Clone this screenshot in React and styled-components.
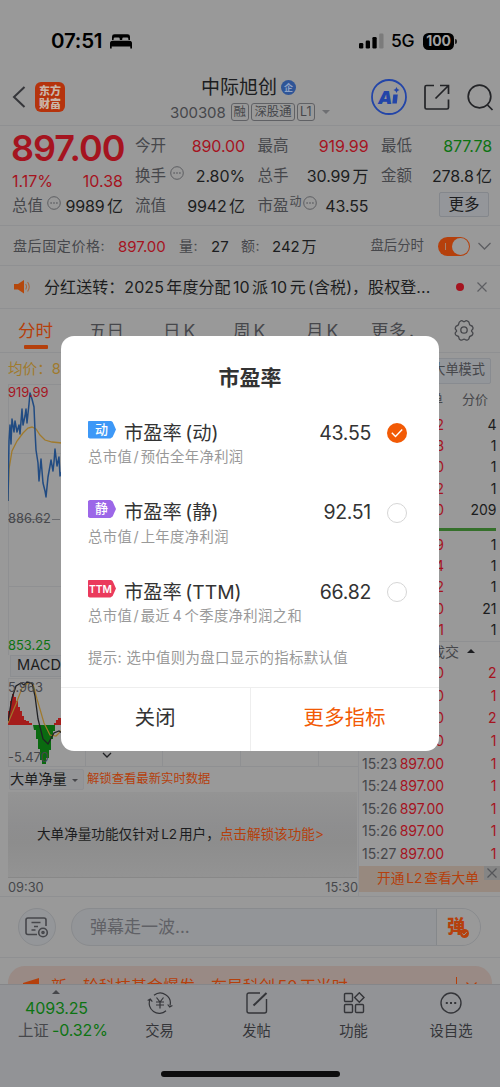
import React from "react";
import styled, { createGlobalStyle } from "styled-components";

const c = {
  page: "#999999",
  ink: "#1c1d20",
  sub: "#46474b",
  mute: "#5d5e62",
  line: "#8f9092",
  red: "#a5141f",
  green: "#0d7312",
  orange: "#b5400c",
  yellow: "#a07a2c",
  bar: "#929396",
};

const Global = createGlobalStyle`
  * { box-sizing: border-box; }
  body { margin: 0; background: ${c.page}; }
`;

const Screen = styled.div`
  position: relative;
  width: 500px;
  height: 1087px;
  overflow: hidden;
  background: ${c.page};
  color: ${c.ink};
  font-family: Inter, "Noto Sans CJK SC", sans-serif;
  font-size: 16px;
  line-height: 1;
  white-space: nowrap;
  svg { display: block; flex: none; }
`;

/* Status bar */
const StatusBar = styled.div`
  height: 66px;
  padding: 16px 43px 0 51px;
  display: flex;
  align-items: center;
  color: #000;
`;
const Clock = styled.span`
  font-size: 20.5px;
  font-weight: 600;
  letter-spacing: -0.2px;
  width: 59px;
`;
const Network = styled.span`
  font-size: 17.5px;
  font-weight: 500;
  margin: 0 9px 0 7px;
  width: 23px;
  letter-spacing: -0.3px;
`;
const Push = styled.span`
  flex: 1;
`;
const Battery = styled.span`
  width: 31px;
  height: 17px;
  border-radius: 5.5px;
  background: #000;
  color: #a3a3a3;
  font-size: 14px;
  font-weight: 700;
  letter-spacing: -0.2px;
  display: flex;
  align-items: center;
  justify-content: center;
`;
const BatteryCap = styled.span`
  width: 2px;
  height: 5px;
  margin-left: 1px;
  border-radius: 0 2px 2px 0;
  background: #222;
`;

/* Title bar */
const Header = styled.header`
  height: 60px;
  border-bottom: 1px solid ${c.line};
  padding: 3px 6px 0 12px;
  display: flex;
  align-items: center;
`;
const Logo = styled.div`
  width: 30px;
  height: 30px;
  margin: 0 0 0 9px;
  border-radius: 6px;
  background: #b5330c;
  color: #c9b5a8;
  font: 900 11px/12.5px "Noto Sans CJK SC", sans-serif;
  text-align: center;
  padding-top: 2px;
  white-space: normal;
`;
const TitleBlock = styled.div`
  width: 168px;
  margin: 7px 0 0 105px;
  height: 50px;
  display: flex;
  flex-direction: column;
`;
const StockName = styled.div`
  display: flex;
  align-items: center;
  font-size: 19px;
  height: 24px;
  padding-left: 31px;
`;
const Verified = styled.span`
  width: 15px;
  height: 15px;
  border-radius: 50%;
  margin-left: 4px;
  background: #2f5597;
  color: #8fa3c4;
  font-size: 9px;
  font-weight: 700;
  display: flex;
  align-items: center;
  justify-content: center;
`;
const CodeLine = styled.div`
  display: flex;
  align-items: center;
  height: 28px;
  color: ${c.sub};
  font-size: 15px;
  gap: 2.5px;
`;
const Code = styled.span`
  width: 58px;
  letter-spacing: -0.1px;
`;
const Tag = styled.span`
  height: 18px;
  padding: 0 2px;
  border: 1px solid #606165;
  border-radius: 3px;
  font-size: 12.4px;
  line-height: 16px;
`;
const Caret = styled.span`
  width: 0;
  height: 0;
  border: ${(p) => p.$size || 4}px solid transparent;
  border-top-color: ${(p) => (p.$up ? "transparent" : p.$color || "#6e6f72")};
  border-bottom-color: ${(p) => (p.$up ? p.$color || c.ink : "transparent")};
  margin: ${(p) => p.$m || "0"};
`;
const HeaderTools = styled.div`
  display: flex;
  align-items: center;
  margin-left: auto;
  gap: 17px;
`;

/* Quote */
const Quote = styled.section`
  height: 100px;
  padding: 4px 8px 0 12px;
  border-bottom: 1px solid ${c.line};
  display: flex;
`;
const PriceColumn = styled.div`
  width: 111px;
  margin-right: 12px;
`;
const LastPrice = styled.div`
  height: 36px;
  line-height: 36px;
  font-size: 36px;
  font-weight: 600;
  letter-spacing: -1px;
  margin-left: -1px;
  color: ${c.red};
`;
const Change = styled.div`
  height: 29px;
  display: flex;
  align-items: center;
  justify-content: space-between;
  color: ${c.red};
`;
const Stats = styled.div`
  margin-top: 1px;
  display: grid;
  grid-template-columns: 110px 111px 111px;
  grid-auto-rows: 30px;
  column-gap: 12.5px;
`;
const Stat = styled.div`
  display: flex;
  align-items: center;
  justify-content: space-between;
  height: ${(p) => p.$h || 30}px;
`;
const Label = styled.span`
  display: flex;
  align-items: center;
  gap: 4px;
  color: ${c.sub};
  font-size: 15.5px;
`;
const Sup = styled.span`
  font-size: 12px;
  margin: -9px -3px 0 -3px;
`;
const Value = styled.span`
  color: ${(p) => p.$color || c.ink};
  letter-spacing: -0.1px;
  word-spacing: -2px;
`;
const MoreButton = styled.span`
  width: 50px;
  height: 25px;
  margin: -3px 3px 0 auto;
  border: 1px solid #84878c;
  background: #94969a;
  border-radius: 2px;
  font-size: 15.5px;
  line-height: 23px;
  text-align: center;
`;

/* After-hours and notice rows */
const AfterHours = styled.section`
  height: 40px;
  padding: 1px 9px 0 13px;
  border-bottom: 1px solid ${c.line};
  display: flex;
  align-items: center;
  color: ${c.sub};
  font-size: 13.4px;
`;
const Figure = styled.span`
  width: ${(p) => p.$w}px;
  color: ${(p) => p.$color || c.ink};
  font-size: 15px;
  word-spacing: -2.5px;
`;
const Key = styled.span`
  width: ${(p) => p.$w}px;
  font-size: 14px;
  letter-spacing: 0.6px;
`;
const Toggle = styled.span`
  width: 32px;
  height: 19px;
  border-radius: 10px;
  background: ${c.orange};
  padding: 1px;
  margin: 0 8px 0 14px;
  display: flex;
  justify-content: flex-end;
  align-items: center;
`;
const ToggleMark = styled.span`
  width: 1px;
  height: 7px;
  margin-right: 6px;
  background: #a48470;
`;
const Knob = styled.span`
  width: 17px;
  height: 17px;
  border-radius: 50%;
  background: ${c.page};
`;
const Notice = styled.section`
  height: 43px;
  padding: 0 12px 0 14px;
  border-bottom: 1px solid ${c.line};
  display: flex;
  align-items: center;
`;
const NoticeText = styled.span`
  width: 412px;
  margin-left: 14px;
  font-size: 16px;
  letter-spacing: 0.07px;
  word-spacing: -2.2px;
`;
const Dot = styled.span`
  width: 8px;
  height: 8px;
  border-radius: 50%;
  background: ${c.red};
  margin-right: 13px;
`;

/* Tabs */
const Tabs = styled.nav`
  height: 44px;
  border-bottom: 1px solid ${c.line};
  display: flex;
  padding-left: 18px;
  font-size: 17.5px;
  color: ${c.sub};
`;
const Tab = styled.span`
  width: ${(p) => p.$w}px;
  padding-top: 13px;
  color: ${(p) => (p.$active ? c.orange : "inherit")};
  word-spacing: -2px;
`;
const Underline = styled.span`
  display: block;
  width: 24px;
  height: 4px;
  margin: 5px 0 0 6px;
  border-radius: 1px;
  background: ${c.orange};
`;
const Gear = styled.span`
  padding-top: 10px;
`;

/* Chart area */
const Market = styled.main`
  height: 544px;
  display: flex;
  border-bottom: 1px solid ${c.line};
`;
const Charts = styled.div`
  width: 358px;
  padding-left: 8px;
`;
const Average = styled.div`
  height: 31px;
  line-height: 32px;
  font-size: 14.6px;
  color: ${c.yellow};
`;
const Plot = styled.div`
  position: relative;
  height: ${(p) => p.$h}px;
  font-size: 12.9px;
`;
const AxisLabel = styled.span`
  position: absolute;
  left: 0;
  ${(p) => (p.$bottom !== undefined ? `bottom: ${p.$bottom}px` : `top: ${p.$top}px`)};
  color: ${(p) => p.$color || c.sub};
`;
const Indicator = styled.div`
  height: 22px;
  margin: 0 0 1px 2px;
  padding-left: 6px;
  width: 76px;
  background: #949597;
  border: 1px solid #8c8e91;
  line-height: 19px;
  font-size: 14.6px;
`;
const UnlockRow = styled.div`
  height: 25px;
  display: flex;
  align-items: center;
`;
const FlowPicker = styled.span`
  width: 75px;
  height: 21px;
  margin-left: 1px;
  display: flex;
  align-items: center;
  background: #949597;
  border: 1px solid #8f9093;
  border-radius: 2px;
  font-size: 14.2px;
`;
const UnlockHint = styled.span`
  color: ${c.orange};
  font-size: 12.35px;
  margin-left: 3px;
`;
const Locked = styled.div`
  height: 86px;
  width: 349px;
  background: linear-gradient(#949494, #8e8e8f 40%, #8d8d8d 60%, #939393);
  border-bottom: 1px solid #888;
  display: flex;
  align-items: center;
  padding-left: 29px;
  font-size: 13.6px;
  word-spacing: -2px;
`;
const Accent = styled.span`
  color: ${c.orange};
`;
const Times = styled.div`
  height: 20px;
  display: flex;
  align-items: center;
  justify-content: space-between;
  color: ${c.sub};
  font-size: 12.8px;
`;

/* Order book */
const Book = styled.aside`
  width: 142px;
  border-left: 1px solid #909194;
  font-size: 14px;
`;
const ModeButton = styled.div`
  height: 26px;
  width: 76px;
  margin: 5px 9px 0 auto;
  background: #93969a;
  border: 1px solid #888b90;
  border-radius: 2px;
  color: ${c.sub};
  font-size: 13.2px;
  line-height: 21px;
  text-align: right;
  padding-right: 5px;
`;
const BookHead = styled.div`
  height: 30px;
  padding-right: 12px;
  display: flex;
  align-items: center;
  justify-content: flex-end;
  gap: 19px;
  color: ${c.sub};
  font-size: 13px;
`;
const BookRow = styled.div`
  height: ${(p) => p.$h || 21.4}px;
  display: grid;
  grid-template-columns: 37px 45px 1fr;
  align-items: center;
  padding: 0 3.5px 0 3px;
  letter-spacing: -0.05px;
`;
const Time = styled.span`
  color: ${c.sub};
`;
const Price = styled.span`
  color: ${c.red};
  text-align: right;
  justify-self: end;
`;
const Qty = styled.span`
  color: ${(p) => (p.$red ? c.red : c.ink)};
  text-align: right;
`;
const Balance = styled.div`
  height: 3px;
  margin: 7px 4px 3px 0;
  background: #35702b;
`;
const DealHead = styled.div`
  height: 21px;
  border-top: 1px solid ${c.line};
  padding: 0 25px 0 0;
  display: flex;
  align-items: center;
  justify-content: flex-end;
  color: ${c.sub};
  font-size: 14px;
`;
const L2Banner = styled.div`
  height: 26px;
  margin-top: 1px;
  display: flex;
  justify-content: flex-end;
  background: #97897f;
  color: ${c.orange};
  font-size: 13.7px;
  line-height: 24px;
  word-spacing: -2px;
`;
const BannerClose = styled.span`
  width: 16px;
  height: 14px;
  margin-left: 5px;
  padding: 2px 0 0 3px;
  background: #858585;
`;

/* Comment row and promo */
const Comment = styled.section`
  height: 61px;
  padding: 0 19px 0 18px;
  border-bottom: 1px solid ${c.line};
  display: flex;
  align-items: center;
  justify-content: space-between;
`;
const RoundButton = styled.span`
  width: 38px;
  height: 38px;
  border-radius: 50%;
  border: 1px solid #898b8e;
  background: #949699;
  display: flex;
  align-items: center;
  justify-content: center;
`;
const Field = styled.div`
  width: 410px;
  height: 38px;
  border: 1px solid #898b8e;
  border-radius: 19px;
  background: #939598;
  display: flex;
  align-items: center;
  padding-left: 18px;
  color: #606166;
  font-size: 17px;
`;
const DanmuButton = styled.span`
  width: 44px;
  height: 36px;
  margin-left: auto;
  border-left: 1px solid #85888b;
  border-radius: 0 18px 18px 0;
  background: #999;
  display: flex;
  align-items: center;
  padding-left: 10px;
  font-size: 18px;
  font-weight: 900;
  color: ${c.orange};
`;
const DanmuCheck = styled.span`
  margin: 13px 0 0 -5px;
`;
const PromoWrap = styled.div`
  height: 26px;
  padding: 8px 8px 0;
  overflow: hidden;
`;
const Promo = styled.div`
  height: 40px;
  border-radius: 17px 17px 0 0;
  background: #998a85;
  color: ${c.orange};
  display: flex;
  padding: 12px 12px 0 15px;
  font-size: 16px;
  word-spacing: -2px;
`;
const PromoText = styled.span`
  width: 417px;
  padding-left: 12px;
`;
const PromoBar = styled.span`
  width: 1px;
  height: 16px;
  margin: -1px 9px 0 0;
  background: ${c.orange};
`;
const PromoArrow = styled.span`
  padding-top: 4px;
`;

/* Bottom navigation */
const BottomNav = styled.nav`
  height: 103px;
  border-top: 1px solid #858689;
  background: ${c.bar};
  display: flex;
  flex-direction: column;
  align-items: center;
`;
const NavItems = styled.div`
  width: 500px;
  height: 86px;
  display: grid;
  grid-template-columns: 111px 97px 97px 97px 98px;
`;
const NavItem = styled.div`
  display: flex;
  flex-direction: column;
  align-items: center;
  padding-top: 7px;
  gap: 9.500px;
  font-size: 14.3px;
  color: #343539;
`;
const IndexItem = styled.div`
  padding: 1px 0 0 18px;
  color: ${c.green};
  letter-spacing: -0.15px;
`;
const IndexValue = styled.div`
  padding: 6px 0 0 7px;
`;
const IndexChange = styled.div`
  padding-top: 6px;
  word-spacing: -1px;
`;
const Dark = styled.span`
  color: ${c.sub};
  font-size: 15.5px;
`;
const HomeBar = styled.div`
  width: 179px;
  height: 6px;
  border-radius: 3px;
  background: #0c0c0d;
`;

/* Dialog */
const Dialog = styled.div`
  position: absolute;
  left: 61px;
  top: 336px;
  width: 378px;
  height: 415px;
  border-radius: 13px;
  background: #fff;
  color: #333;
  display: flex;
  flex-direction: column;
`;
const DialogTitle = styled.h2`
  margin: 0;
  height: 80px;
  padding-top: 31px;
  font-size: 21px;
  line-height: 21px;
  font-weight: 600;
  text-align: center;
`;
const Option = styled.div`
  height: 79.5px;
  padding: 0 32px 0 27px;
`;
const OptionTop = styled.div`
  height: 34px;
  display: flex;
  align-items: center;
`;
const Kind = styled.span`
  width: 28px;
  height: 18px;
  margin-top: -7px;
  background: ${(p) => p.$color};
  color: #fff;
  clip-path: polygon(6% 0, 80% 0, 88% 8%, 100% 50%, 88% 92%, 80% 100%, 6% 100%, 0 94%, 0 6%);
  font-size: ${(p) => (p.$small ? 10.2 : 13)}px;
  font-weight: ${(p) => (p.$small ? 600 : 500)};
  line-height: ${(p) => (p.$small ? 18 : 17)}px;
  padding-right: ${(p) => (p.$small ? 3 : 1)}px;
  text-align: center;
`;
const OptionName = styled.span`
  margin: 1px 0 0 8px;
  font-size: 19.3px;
  word-spacing: -2px;
`;
const OptionValue = styled.span`
  margin: 1px 16px 0 auto;
  font-size: 19.5px;
  letter-spacing: -0.3px;
`;
const Radio = styled.span`
  width: 20px;
  height: 20px;
  border-radius: 50%;
  border: ${(p) => (p.$on ? "none" : "1px solid #d6d6d6")};
  background: ${(p) => (p.$on ? "#f25a05" : "#fff")};
  display: flex;
  align-items: center;
  justify-content: center;
`;
const Desc = styled.div`
  height: 14px;
  line-height: 14px;
  font-size: 14.3px;
  color: #999;
  letter-spacing: 0.4px;
  word-spacing: -2px;
`;
const Slash = styled.span`
  margin: 0 1.500px;
`;
const Tip = styled.div`
  height: 34px;
  padding: 0 27px;
  font-size: 14.4px;
  line-height: 14px;
  color: #999;
  margin-top: -4px;
  letter-spacing: 0.38px;
`;
const DialogActions = styled.div`
  margin-top: auto;
  height: 64px;
  border-top: 1px solid #eee;
  display: flex;
`;
const Action = styled.div`
  flex: 1;
  line-height: 60px;
  text-align: center;
  font-size: 20.3px;
  color: ${(p) => (p.$primary ? "#f25a05" : "#333")};
  letter-spacing: 0.3px;
  & + & { border-left: 1px solid #eee; }
`;

const IconShift = styled.span`
  margin-top: -6px;
`;
const Info = () => (
  <IconShift>
    <svg width="14" height="14" viewBox="0 0 14 14" fill="none" stroke={c.mute}>
      <circle cx="7" cy="7" r="6.3" />
      <path d="M3.4 7h1.4M6.3 7h1.4M9.2 7h1.4" strokeWidth="1.4" />
    </svg>
  </IconShift>
);
const Cross = ({ s = 10, color = c.mute }) => (
  <svg width={s} height={s} viewBox="0 0 10 10" stroke={color} strokeWidth="1.2">
    <path d="M.5.5l9 9M9.5.5l-9 9" />
  </svg>
);
const Bed = () => (
  <svg width="22" height="15" viewBox="0 0 22 15">
    <path d="M2 6V2.700Q2 .3 4.500.3h13Q20 .3 20 2.700V6h-1.600V5q0-1.400-1.400-1.400h-3.400Q12.200 3.600 12.200 5v1H9.800V5q0-1.400-1.400-1.400H5Q3.600 3.600 3.600 5v1z" />
    <path d="M2.500 6.700h17Q22 6.700 22 9.300V14.600h-1.700v-2H1.700v2H0V9.300Q0 6.700 2.500 6.700z" />
  </svg>
);
const Signal = () => (
  <svg width="25" height="16" viewBox="0 0 25 16">
    <rect x="0" y="10" width="4.300" height="5.500" rx="1.200" />
    <rect x="6.700" y="7.500" width="4.300" height="8" rx="1.200" />
    <rect x="13.400" y="4" width="4.300" height="11.500" rx="1.200" />
    <rect x="20.200" y="0.500" width="4.300" height="15" rx="1.200" fill="#7b7b7b" />
  </svg>
);
const Ai = () => (
  <svg width="36" height="36" viewBox="0 0 36 36">
    <circle cx="18" cy="18" r="17" fill="none" stroke="#2345a8" strokeWidth="1.800" />
    <text x="7" y="24.500" fontFamily="Inter" fontWeight="900" fontSize="18" fontStyle="italic" fill="#2345a8">A</text>
    <path d="M22.300 15.500h4.500l-1 9h-4.500z" fill="#2345a8" />
    <path d="M25.500 8q.5 2.500 3 3-2.500.5-3 3-.5-2.500-3-3 2.500-.5 3-3z" fill="#2345a8" />
  </svg>
);
const Share = () => (
  <svg width="26" height="26" viewBox="0 0 26 26" fill="none" stroke="#232427" strokeWidth="1.700">
    <path d="M10 1.500H2.500Q1 1.500 1 3V23.500q0 1.500 1.500 1.500h20.500q1.500 0 1.500-1.500v-8M16 1.500h8.500V10M24 2L11.500 14.500" />
  </svg>
);
const Search = () => (
  <svg width="27" height="27" viewBox="0 0 27 27" fill="none" stroke="#232427" strokeWidth="1.700">
    <circle cx="12.500" cy="12.500" r="11.300" />
    <path d="M20.500 21l5 5" />
  </svg>
);
const Speaker = () => (
  <svg width="16" height="14" viewBox="0 0 16 14">
    <path d="M0 4h4l6-4v13.500L4 9.500H0z" fill="#b5480c" />
    <path d="M11.600 4q1.800 2.700 0 5.500M13.600 2q3.300 4.700 0 9.500" fill="none" stroke="#a8673c" strokeWidth="1.100" />
  </svg>
);
const GearIcon = () => (
  <svg width="22" height="22" viewBox="0 0 22 22" fill="none" stroke={c.sub} strokeWidth="1.300" strokeLinejoin="round">
    <path d="M7.300 2.200Q8.700 1.200 10 2.200q1 .8 2 0 1.300-1 2.700 0 1.700.8 1.600 2.400 0 1.500 1.400 1.900 1.800.3 2.300 2.200.2 1.500-1 2.300-1 .8 0 1.800 1.200 1 .8 2.200-.5 1.700-2.100 2-1.500.3-1.500 1.900-.1 1.500-1.600 2.100-1.400.5-2.500-.4-1-.9-2.100 0-1.200.9-2.600.3-1.500-.7-1.500-2.200 0-1.400-1.400-1.700-1.700-.3-2.200-1.900-.4-1.300.8-2.300 1-.9 0-1.800Q1.900 10 2.300 8.700q.5-1.800 2.200-2.200 1.300-.3 1.300-1.900.1-1.600 1.500-2.400z" />
    <circle cx="11" cy="11" r="3.200" />
  </svg>
);
const SettingsCard = () => (
  <svg width="24" height="21" viewBox="0 0 24 21" fill="none" stroke={c.sub} strokeWidth="1.600">
    <path d="M12 17.500H3q-2 0-2-2V3q0-2 2-2h16q2 0 2 2v6M6.500 5.500h9M9 9.500h4M6.500 13h4" />
    <circle cx="18" cy="15.500" r="4.300" />
    <circle cx="18" cy="15.500" r="1" />
  </svg>
);
const Trade = () => (
  <svg width="26" height="22" viewBox="0 0 26 22" fill="none" stroke="#343539" strokeWidth="1.200">
    <path d="M7 3.300A10 10 0 0 1 23 13.500M19 18.700A10 10 0 0 1 3 7.500M.7 8.500L3.300 7l2 2.600M20.700 12.500l2 2.500 2.700-1.500M9.500 5.500l3.500 4.500 3.500-4.500M9 10h8M9 13h8M13 10v6.500" />
  </svg>
);
const Post = () => (
  <svg width="22" height="22" viewBox="0 0 22 22" fill="none" stroke="#343539" strokeWidth="1.400">
    <path d="M14 1H3Q1 1 1 3v16q0 2 2 2h15.500q2 0 2-2V7" />
    <path d="M7.500 13.500L20.500 1" strokeWidth="2" />
  </svg>
);
const Apps = () => (
  <svg width="22" height="22" viewBox="0 0 22 22" fill="none" stroke="#343539" strokeWidth="1.400">
    <rect x="1.500" y="1.500" width="8" height="8" rx="1" />
    <rect x="1.500" y="12.500" width="8" height="8" rx="1" />
    <rect x="12.500" y="12.500" width="8" height="8" rx="1" />
    <path d="M16.300.8l4.700 4.700-4.700 4.700-4.700-4.700z" />
  </svg>
);
const Dots = () => (
  <svg width="22" height="22" viewBox="0 0 22 22" fill="none" stroke="#343539" strokeWidth="1.400">
    <circle cx="11" cy="11" r="10" />
    <path d="M5.800 11h2M10 11h2M14.200 11h2" strokeWidth="2" />
  </svg>
);
const Check = () => (
  <svg width="12" height="10" viewBox="0 0 12 10" fill="none" stroke="#fff" strokeWidth="1.400">
    <path d="M.8 4.800l3.700 3.700L11.200 1.500" />
  </svg>
);

const PriceChart = () => (
  <svg width="350" height="271" viewBox="8 383 350 271" fill="none">
    <path d="M8 383.500H358M8 452.500H358M8 585.500H358M8.500 383V655" stroke={c.line} />
    <path d="M8 518.500H48M52 518.500H358" stroke="#6b6c70" strokeDasharray="8 2" />
    <path d="M8 500L9 468 12 450 17 440 23 432 28 427 32 426 36 428 40 434 45 439 52 441 62 442" stroke={c.yellow} strokeWidth="1.300" />
    <path d="M8 500L9 440 10 424 11 443 12 418 14 431 15 420 17 431 19 424 20 433 22 408 23 424 25 415 26 408 27 422 29 403 30 392 32 398 34 406 35 430 36 449 38 462 39 480 41 458 43 482 45 490 46 496 48 476 50 465 51 459 53 470 54 461 55 448 57 465 59 456 60 475 62 470" stroke="#214b82" strokeWidth="1.500" strokeLinejoin="round" />
  </svg>
);
const MacdChart = () => (
  <svg width="350" height="89" viewBox="8 677 350 89" fill="none">
    <path d="M8 677.500H358M8 765.500H358M8.500 677V766M85.500 677V766M162.500 677V766M240.500 677V766M318.500 677V766" stroke={c.line} />
    <path d="M8 724V710h2v-10h2v-7h2v3h2v4h2v6h2v4h2v5h2v4h2v1h3v2h3v2h2zM54 724v-2h2v-3h2v-2h4v7z" fill="#a51d1c" />
    <path d="M33 724h22v6h-2v8h-2v11h-2v8h-3v6h-4v-4h-2v-11h-2v-10h-2v-9h-2z" fill="#0a6a10" />
    <path d="M8 722L16 703 22 687 28 682 33 683 37 698 44 722 50 734 56 735 62 729" stroke={c.yellow} strokeWidth="1.200" />
    <path d="M8 720L12 697 16 685 21 682 24 684 27 681 32 682 35 695 38 718 43 738 48 743 54 732 59 730 62 732M103 752l4 4 4-4" stroke="#202124" strokeWidth="1.300" />
  </svg>
);

const asks = [["2", "4"], ["3", "1"], ["0", "1"], ["2", "1"], ["0", "209"]];
const bids = [["9", "1"], ["4", "1"], ["2", "1"], ["0", "21"], ["1", "1"]];
const deals = [["", "2"], ["", "1"], ["", "2"], ["", "1"], ["15:23", "1"], ["15:24", "1"], ["15:26", "1"], ["15:26", "1"], ["15:27", "1"]];
const options = [
  { kind: "动", color: "#3d98f7", name: "市盈率 (动)", value: "43.55", desc: "预估全年净利润", on: true },
  { kind: "静", color: "#9c67e8", name: "市盈率 (静)", value: "92.51", desc: "上年度净利润" },
  { kind: "TTM", color: "#ea3a5c", name: "市盈率 (TTM)", value: "66.82", desc: "最近 4 个季度净利润之和" },
];

export default function App() {
  return (
    <Screen>
      <Global />
      <StatusBar>
        <Clock>07:51</Clock>
        <Bed />
        <Push />
        <Signal />
        <Network>5G</Network>
        <Battery>100</Battery>
        <BatteryCap />
      </StatusBar>

      <Header>
        <svg width="14" height="22" viewBox="0 0 14 22" fill="none" stroke="#35363a" strokeWidth="2">
          <path d="M12.500 1L2 11l10.500 10" />
        </svg>
        <Logo>东方<br />财富</Logo>
        <TitleBlock>
          <StockName>中际旭创<Verified>企</Verified></StockName>
          <CodeLine>
            <Code>300308</Code>
            <Tag>融</Tag><Tag>深股通</Tag><Tag>L1</Tag>
            <Caret $size={4.5} $m="4px 0 0 5px" />
          </CodeLine>
        </TitleBlock>
        <HeaderTools><Ai /><Share /><Search /></HeaderTools>
      </Header>

      <Quote>
        <PriceColumn>
          <LastPrice>897.00</LastPrice>
          <Change><span>1.17%</span><span>10.38</span></Change>
          <Stat $h={22}><Label>总值<Info /></Label><Value>9989 亿</Value></Stat>
        </PriceColumn>
        <Stats>
          <Stat><Label>今开</Label><Value $color={c.red}>890.00</Value></Stat>
          <Stat><Label>最高</Label><Value $color={c.red}>919.99</Value></Stat>
          <Stat><Label>最低</Label><Value $color={c.green}>877.78</Value></Stat>
          <Stat><Label>换手<Info /></Label><Value>2.80%</Value></Stat>
          <Stat><Label>总手</Label><Value>30.99 万</Value></Stat>
          <Stat><Label>金额</Label><Value>278.8 亿</Value></Stat>
          <Stat><Label>流值</Label><Value>9942 亿</Value></Stat>
          <Stat><Label>市盈<Sup>动</Sup><Info /></Label><Value>43.55</Value></Stat>
          <Stat><MoreButton>更多</MoreButton></Stat>
        </Stats>
      </Quote>

      <AfterHours>
        <Key $w={105}>盘后固定价格:</Key>
        <Figure $w={61} $color={c.red}>897.00</Figure>
        <Key $w={32}>量:</Key>
        <Figure $w={30}>27</Figure>
        <Key $w={31}>额:</Key>
        <Figure $w={44}>242 万</Figure>
        <Push />
        <span>盘后分时</span>
        <Toggle><ToggleMark /><Knob /></Toggle>
        <svg width="13" height="8" viewBox="0 0 13 8" fill="none" stroke={c.mute} strokeWidth="1.300"><path d="M.5 1l6 6 6-6" /></svg>
      </AfterHours>

      <Notice>
        <Speaker />
        <NoticeText>分红送转：2025 年度分配 10 派 10 元 (含税)，股权登...</NoticeText>
        <Dot />
        <Cross />
      </Notice>

      <Tabs>
        <Tab $active $w={71}>分时<Underline /></Tab>
        <Tab $w={74}>五日</Tab>
        <Tab $w={70}>日 K</Tab>
        <Tab $w={73}>周 K</Tab>
        <Tab $w={65}>月 K</Tab>
        <Tab $w={82}>更多 .</Tab>
        <Gear><GearIcon /></Gear>
      </Tabs>

      <Market>
        <Charts>
          <Average>均价：897.00</Average>
          <Plot $h={271}>
            <PriceChart />
            <AxisLabel $top={3} $color={c.red}>919.99</AxisLabel>
            <AxisLabel $top={129}>886.62</AxisLabel>
            <AxisLabel $bottom={2} $color={c.green}>853.25</AxisLabel>
          </Plot>
          <Indicator>MACD</Indicator>
          <Plot $h={89}>
            <MacdChart />
            <AxisLabel $top={4}>5.963</AxisLabel>
            <AxisLabel $bottom={2}>-5.470</AxisLabel>
          </Plot>
          <UnlockRow>
            <FlowPicker>大单净量<Caret $size={3.5} $color={c.sub} $m="4px 0 0 5px" /></FlowPicker>
            <UnlockHint>解锁查看最新实时数据</UnlockHint>
          </UnlockRow>
          <Locked>大单净量功能仅针对 L2 用户，<Accent>点击解锁该功能&gt;</Accent></Locked>
          <Times><span>09:30</span><span>15:30</span></Times>
        </Charts>
        <Book>
          <ModeButton>大单模式</ModeButton>
          <BookHead><span>单</span><span>分价</span></BookHead>
          {asks.map(([p, q], i) => (
            <BookRow key={i}><span /><Price>{p}</Price><Qty>{q}</Qty></BookRow>
          ))}
          <Balance />
          {bids.map(([p, q], i) => (
            <BookRow key={i}><span /><Price>{p}</Price><Qty>{q}</Qty></BookRow>
          ))}
          <DealHead>成交<Caret $up $size={4} $m="-5px 0 0 8px" /></DealHead>
          {deals.map(([t, q], i) => (
            <BookRow key={i} $h={22.6}><Time>{t}</Time><Price>897.00</Price><Qty $red>{q}</Qty></BookRow>
          ))}
          <L2Banner>开通 L2 查看大单<BannerClose><Cross color="#55565a" /></BannerClose></L2Banner>
        </Book>
      </Market>

      <Comment>
        <RoundButton><SettingsCard /></RoundButton>
        <Field>
          弹幕走一波...
          <DanmuButton>
            弹
            <DanmuCheck>
              <svg width="9" height="9" viewBox="0 0 9 9"><circle cx="4.500" cy="4.500" r="4.500" fill={c.orange} /><path d="M2.300 4.500l1.700 1.600 2.700-3" fill="none" stroke="#999" /></svg>
            </DanmuCheck>
          </DanmuButton>
        </Field>
      </Comment>

      <PromoWrap>
        <Promo>
          <svg width="16" height="12" viewBox="0 0 16 12"><path d="M0 5L16 0v10H0z" fill={c.orange} /></svg>
          <PromoText>新一轮科技基金爆发，布局科创 50 正当时</PromoText>
          <PromoBar />
          <PromoArrow>
            <svg width="11" height="7" viewBox="0 0 11 7" fill="none" stroke={c.orange} strokeWidth="1.300"><path d="M.5.500l5 5 5-5" /></svg>
          </PromoArrow>
        </Promo>
      </PromoWrap>

      <BottomNav>
        <NavItems>
          <IndexItem>
            <Caret as="div" $up $size={4} $m="0 0 0 34px" $color={c.sub} />
            <IndexValue>4093.25</IndexValue>
            <IndexChange><Dark>上证</Dark> -0.32%</IndexChange>
          </IndexItem>
          <NavItem><Trade />交易</NavItem>
          <NavItem><Post />发帖</NavItem>
          <NavItem><Apps />功能</NavItem>
          <NavItem><Dots />设自选</NavItem>
        </NavItems>
        <HomeBar />
      </BottomNav>

      <Dialog>
        <DialogTitle>市盈率</DialogTitle>
        {options.map((o) => (
          <Option key={o.kind}>
            <OptionTop>
              <Kind $color={o.color} $small={o.kind === "TTM"}>{o.kind}</Kind>
              <OptionName>{o.name}</OptionName>
              <OptionValue>{o.value}</OptionValue>
              <Radio $on={o.on}>{o.on && <Check />}</Radio>
            </OptionTop>
            <Desc>总市值<Slash>/</Slash>{o.desc}</Desc>
          </Option>
        ))}
        <Tip>提示: 选中值则为盘口显示的指标默认值</Tip>
        <DialogActions>
          <Action>关闭</Action>
          <Action $primary>更多指标</Action>
        </DialogActions>
      </Dialog>
    </Screen>
  );
}
